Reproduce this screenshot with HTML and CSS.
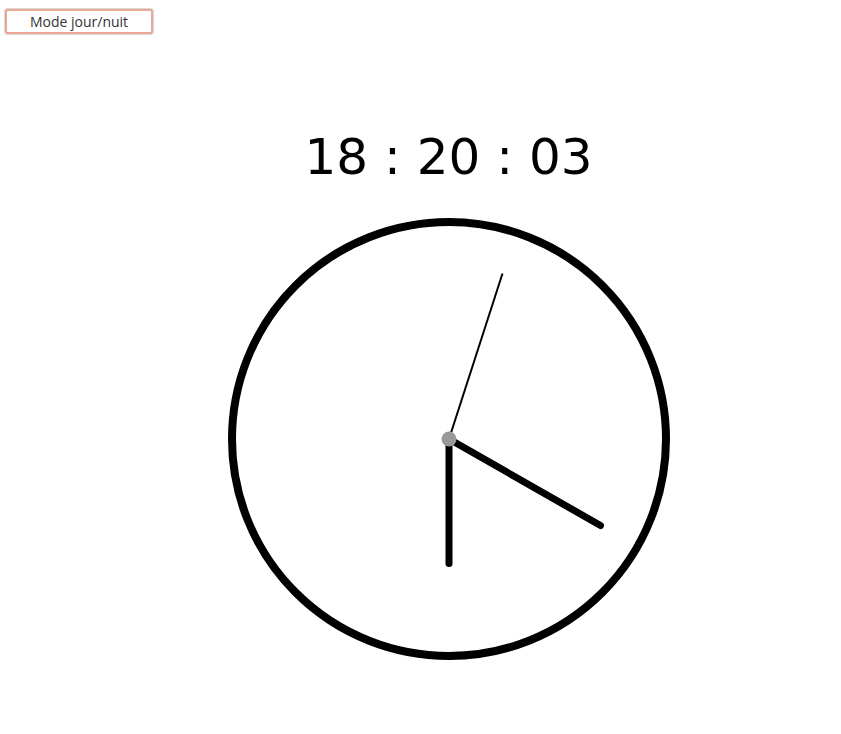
FILE: index.html
```html
<!DOCTYPE html>
<html lang="fr">
<head>
<meta charset="utf-8">
<title>Horloge</title>
<link rel="stylesheet" href="styles.css">
</head>
<body>
<button class="mode-btn" type="button">Mode jour/nuit</button>
<main class="clock-wrap">
  <div class="digital">18 : 20 : 03</div>
  <svg class="analog" width="450" height="450" viewBox="0 0 450 450">
    <circle cx="225" cy="225" r="217" fill="none" stroke="#000" stroke-width="8"/>
    <line x1="225" y1="225" x2="376.5" y2="311.5" stroke="#000" stroke-width="7" stroke-linecap="round"/>
    <line x1="225" y1="225" x2="225" y2="349.5" stroke="#000" stroke-width="7" stroke-linecap="round"/>
    <line x1="225" y1="225" x2="278.5" y2="59.5" stroke="#000" stroke-width="2"/>
    <circle cx="225" cy="225" r="7.5" fill="#999"/>
  </svg>
</main>
</body>
</html>
```
FILE: styles.css
```css
html, body {
  margin: 0;
  padding: 0;
  background: #fff;
}
body {
  font-family: "DejaVu Sans", sans-serif;
}
.mode-btn {
  display: block;
  margin: 9px 0 0 5px;
  width: 148px;
  height: 25px;
  padding: 0;
  background: #fff;
  border: 2px solid #eba794;
  border-radius: 3px;
  box-shadow: 0 0 0 1px #d8d8d8;
  font-family: "Open Sans", sans-serif;
  font-size: 14px;
  color: #333;
}
.clock-wrap {
  display: flex;
  flex-direction: column;
  align-items: center;
  padding-left: 56px;
}
.digital {
  margin-top: 94px;
  font-size: 50px;
  line-height: 58px;
  color: #000;
  text-align: center;
}
.analog {
  display: block;
  margin-top: 28px;
}
```
